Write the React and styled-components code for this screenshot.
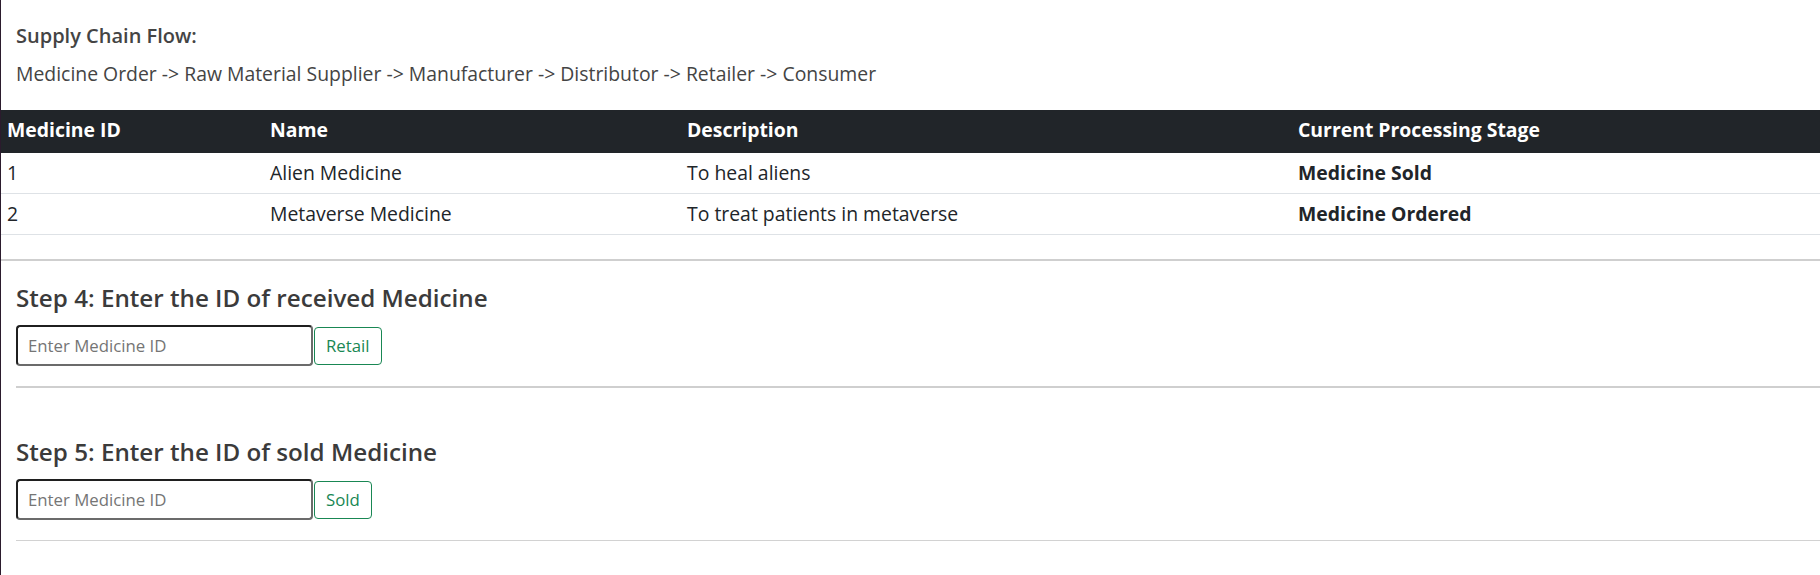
import React from "react";
import styled, { createGlobalStyle } from "styled-components";

const GlobalStyle = createGlobalStyle`
  *, *::before, *::after { box-sizing: border-box; }
  html, body { margin: 0; padding: 0; background: #ffffff; }
  body { font-family: "Open Sans", "Noto Sans", sans-serif; color: #212529; }
`;

const Page = styled.div`
  min-height: 100vh;
  border-left: 1px solid #2b1b2d;
  background: #ffffff;
`;

const Intro = styled.section`
  padding: 24px 0 0 15px;
  color: #444444;
`;

const FlowTitle = styled.div`
  font-size: 20px;
  line-height: 24px;
  font-weight: 600;
`;

const FlowText = styled.p`
  margin: 14px 0 0;
  font-size: 19.4px;
  line-height: 24px;
  font-weight: 400;
`;

const Table = styled.table`
  margin-top: 24px;
  width: 100%;
  border-collapse: collapse;
  table-layout: fixed;
  font-size: 19.4px;
  line-height: 24px;
  color: #212529;
`;

const HeadCell = styled.th`
  background: #212529;
  color: #ffffff;
  font-weight: 700;
  text-align: left;
  vertical-align: top;
  padding: 8px 6px 11px;
  white-space: nowrap;
`;

const BodyRow = styled.tr`
  border-bottom: 1px solid #dee2e6;
`;

const Cell = styled.td`
  padding: 8px 6px;
  font-weight: ${(p) => (p.$strong ? 700 : 400)};
  white-space: nowrap;
`;

const Rule = styled.hr`
  margin: ${(p) => p.$margin || "0"};
  border: 0;
  height: ${(p) => p.$thick || 2}px;
  background: ${(p) => p.$color || "#cfcfcf"};
`;

const Steps = styled.div`
  padding-left: 15px;
`;

const StepTitle = styled.h4`
  margin: ${(p) => p.$top}px 0 0;
  font-size: 24.2px;
  line-height: 29px;
  font-weight: 600;
  color: #3b3b3b;
`;

const FormRow = styled.div`
  display: flex;
  align-items: center;
  gap: 1px;
  margin-top: 13px;
`;

const IdInput = styled.input`
  width: 297px;
  height: 41px;
  padding: 0 10px;
  border-width: 2px;
  border-style: solid;
  border-color: #1f1f1f #6b6b6b #6b6b6b #1f1f1f;
  border-radius: 4px;
  font-family: "Open Sans", sans-serif;
  font-size: 16.8px;
  color: #212529;
  background: #ffffff;
  outline: none;
  &::placeholder { color: #757575; }
`;

const ActionButton = styled.button`
  height: 38px;
  padding: 0 11px;
  border: 1px solid #198754;
  border-radius: 4px;
  background: transparent;
  color: #198754;
  font-family: "Open Sans", sans-serif;
  font-size: 16.8px;
  line-height: 24px;
  cursor: pointer;
`;

const medicines = [
  { id: 1, name: "Alien Medicine", description: "To heal aliens", stage: "Medicine Sold" },
  { id: 2, name: "Metaverse Medicine", description: "To treat patients in metaverse", stage: "Medicine Ordered" },
];

const steps = [
  { title: "Step 4: Enter the ID of received Medicine", action: "Retail", top: 22, thick: 2, color: "#cfcfcf" },
  { title: "Step 5: Enter the ID of sold Medicine", action: "Sold", top: 49, thick: 1, color: "#d2d2d2" },
];

export default function App() {
  return (
    <Page>
      <GlobalStyle />
      <Intro>
        <FlowTitle>Supply Chain Flow:</FlowTitle>
        <FlowText>
          Medicine Order -&gt; Raw Material Supplier -&gt; Manufacturer -&gt; Distributor -&gt; Retailer -&gt; Consumer
        </FlowText>
      </Intro>
      <Table>
        <colgroup>
          <col style={{ width: 263 }} />
          <col style={{ width: 417 }} />
          <col style={{ width: 611 }} />
          <col />
        </colgroup>
        <thead>
          <tr>
            <HeadCell>Medicine ID</HeadCell>
            <HeadCell>Name</HeadCell>
            <HeadCell>Description</HeadCell>
            <HeadCell>Current Processing Stage</HeadCell>
          </tr>
        </thead>
        <tbody>
          {medicines.map((m) => (
            <BodyRow key={m.id}>
              <Cell>{m.id}</Cell>
              <Cell>{m.name}</Cell>
              <Cell>{m.description}</Cell>
              <Cell $strong>{m.stage}</Cell>
            </BodyRow>
          ))}
        </tbody>
      </Table>
      <Rule $margin="24px 0 0" />
      <Steps>
        {steps.map((s) => (
          <div key={s.action}>
            <StepTitle $top={s.top}>{s.title}</StepTitle>
            <FormRow>
              <IdInput type="text" placeholder="Enter Medicine ID" />
              <ActionButton type="button">{s.action}</ActionButton>
            </FormRow>
            <Rule $margin="20px 0 0" $thick={s.thick} $color={s.color} />
          </div>
        ))}
      </Steps>
    </Page>
  );
}
